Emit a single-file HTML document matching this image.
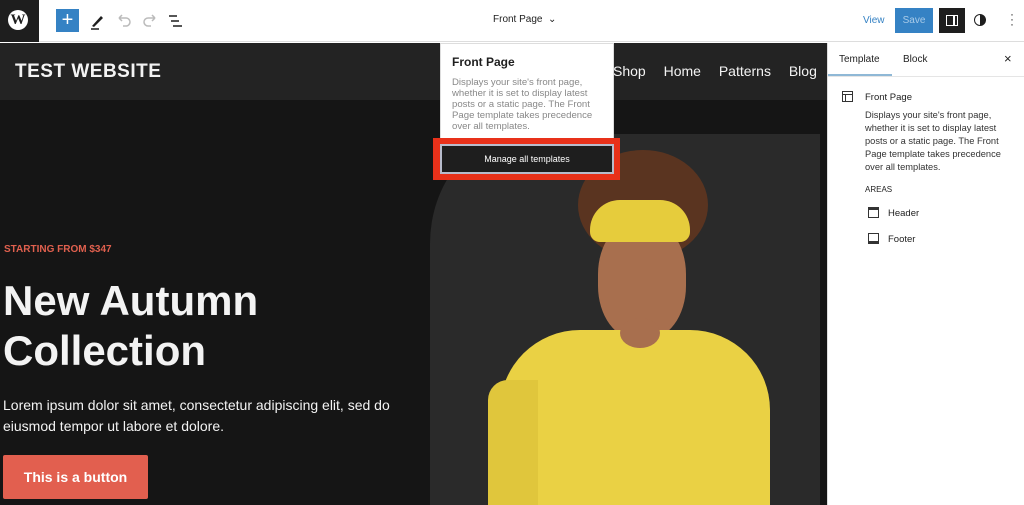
<!DOCTYPE html>
<html><head><meta charset="utf-8"><style>
*{margin:0;padding:0;box-sizing:border-box}
body{width:1024px;height:505px;overflow:hidden;background:#fff;font-family:"Liberation Sans",sans-serif;position:relative}
.a{position:absolute}
</style></head><body>
<div class="a" style="left:0;top:0;width:1024px;height:42px;background:#fff;border-bottom:1px solid #ddd"></div>
<div class="a" style="left:0;top:0;width:39px;height:42px;background:#1e1e1e"></div>
<div class="a" style="left:8px;top:10px;width:20px;height:20px;border-radius:50%;background:#fff;color:#1e1e1e;font:bold 15px 'Liberation Serif',serif;text-align:center;line-height:20px">W</div>
<div class="a" style="left:56px;top:9px;width:23px;height:23px;background:#3582c4;color:#fff;font-size:20px;text-align:center;line-height:22px">+</div>
<svg class="a" style="left:88px;top:11px" width="20" height="20" viewBox="0 0 20 20"><path d="M4 15 L13 5 l2 2 L6 16 Z" fill="#1e1e1e"/><path d="M3 18h8" stroke="#1e1e1e" stroke-width="1.5"/></svg>
<svg class="a" style="left:115px;top:12px" width="18" height="18" viewBox="0 0 18 18"><path d="M4 6h7a4 4 0 010 8H8M4 6l3-3M4 6l3 3" stroke="#bbb" fill="none" stroke-width="1.5"/></svg>
<svg class="a" style="left:141px;top:12px" width="18" height="18" viewBox="0 0 18 18"><path d="M14 6H7a4 4 0 000 8h3M14 6l-3-3M14 6l-3 3" stroke="#bbb" fill="none" stroke-width="1.5"/></svg>
<svg class="a" style="left:167px;top:12px" width="18" height="18" viewBox="0 0 18 18"><path d="M2 4h8M4 9h8M6 14h9" stroke="#1e1e1e" stroke-width="1.6"/></svg>
<div class="a" style="left:493px;top:14px;font-size:10px;color:#1e1e1e">Front Page &nbsp;⌄</div>
<div class="a" style="left:863px;top:15px;font-size:10px;color:#3582c4">View</div>
<div class="a" style="left:895px;top:8px;width:38px;height:25px;background:#3582c4;color:#a9cbe8;font-size:10px;text-align:center;line-height:25px">Save</div>
<div class="a" style="left:939px;top:8px;width:26px;height:25px;background:#1e1e1e"><div class="a" style="left:7px;top:7px;width:12px;height:11px;border:1.5px solid #fff"></div><div class="a" style="left:14px;top:7px;width:1.5px;height:11px;background:#fff"></div></div>
<div class="a" style="left:974px;top:14px;width:12px;height:12px;border-radius:50%;border:1.5px solid #1e1e1e;background:linear-gradient(90deg,#fff 50%,#1e1e1e 50%)"></div>
<div class="a" style="left:1010px;top:12px;font-size:12px;color:#333;line-height:5px">·<br>·<br>·</div>
<div class="a" style="left:0;top:43px;width:827px;height:462px;background:#151515"></div>
<div class="a" style="left:0;top:43px;width:827px;height:57px;background:#232323"></div>
<div class="a" style="left:15px;top:61px;font-size:19px;font-weight:bold;color:#f3f3f3;letter-spacing:.5px">TEST WEBSITE</div>
<div class="a" style="left:613px;top:63px;font-size:14px;color:#f3f3f3;word-spacing:14px">Shop Home Patterns Blog</div>
<div class="a" style="left:430px;top:134px;width:390px;height:371px;background:#2a2a2a;border-top-left-radius:90px 110px"></div>
<div class="a" style="left:578px;top:150px;width:130px;height:110px;border-radius:50%;background:#5a3420"></div>
<div class="a" style="left:598px;top:220px;width:88px;height:120px;border-radius:45%;background:#a86f4e"></div>
<div class="a" style="left:590px;top:200px;width:100px;height:42px;border-radius:30px 30px 10px 10px;background:#e6cc3c"></div>
<div class="a" style="left:500px;top:330px;width:270px;height:175px;border-radius:80px 80px 0 0;background:#ead144"></div>
<div class="a" style="left:488px;top:380px;width:50px;height:125px;background:#e0c63c;border-radius:20px 0 0 0"></div>
<div class="a" style="left:620px;top:318px;width:40px;height:30px;border-radius:50%;background:#a86f4e"></div>
<div class="a" style="left:4px;top:244px;font-size:10px;font-weight:bold;color:#e0604e">STARTING FROM $347</div>
<div class="a" style="left:3px;top:276px;font-size:42px;font-weight:bold;color:#f3f3f3;line-height:50px">New Autumn<br>Collection</div>
<div class="a" style="left:3px;top:395px;font-size:14px;color:#f3f3f3;line-height:21px">Lorem ipsum dolor sit amet, consectetur adipiscing elit, sed do<br>eiusmod tempor ut labore et dolore.</div>
<div class="a" style="left:3px;top:455px;width:145px;height:44px;background:#e25f4f;border-radius:2px;color:#fff;font-size:14px;font-weight:bold;text-align:center;line-height:44px">This is a button</div>
<div class="a" style="left:440px;top:43px;width:174px;height:132px;background:#fff;border:1px solid #ddd"></div>
<div class="a" style="left:452px;top:55px;font-size:12px;font-weight:bold;color:#1e1e1e">Front Page</div>
<div class="a" style="left:452px;top:77px;font-size:9.6px;color:#888;line-height:11px;width:156px">Displays your site's front page, whether it is set to display latest posts or a static page. The Front Page template takes precedence over all templates.</div>
<div class="a" style="left:433px;top:138px;width:187px;height:42px;background:#e8311a"></div>
<div class="a" style="left:440px;top:144px;width:174px;height:30px;background:#1e1e1e;border:2px solid #b8bccc;color:#fff;font-size:9px;text-align:center;line-height:26px">Manage all templates</div>
<div class="a" style="left:827px;top:43px;width:197px;height:462px;background:#fff;border-left:1px solid #ddd"></div>
<div class="a" style="left:828px;top:76px;width:196px;height:1px;background:#e5e5e5"></div>
<div class="a" style="left:828px;top:74px;width:64px;height:2px;background:#8fb8d6"></div>
<div class="a" style="left:839px;top:54px;font-size:10px;color:#1e1e1e">Template</div>
<div class="a" style="left:903px;top:54px;font-size:10px;color:#1e1e1e">Block</div>
<div class="a" style="left:1004px;top:51px;font-size:13px;color:#1e1e1e">×</div>
<div class="a" style="left:842px;top:91px;width:11px;height:11px;border:1.3px solid #333"></div>
<div class="a" style="left:842px;top:94px;width:11px;height:1.3px;background:#333"></div>
<div class="a" style="left:845px;top:94px;width:1.3px;height:8px;background:#333"></div>
<div class="a" style="left:865px;top:92px;font-size:9.5px;color:#1e1e1e">Front Page</div>
<div class="a" style="left:865px;top:109px;font-size:9.3px;color:#333;line-height:13px;width:150px">Displays your site's front page, whether it is set to display latest posts or a static page. The Front Page template takes precedence over all templates.</div>
<div class="a" style="left:865px;top:185px;font-size:8px;color:#1e1e1e">AREAS</div>
<div class="a" style="left:868px;top:207px;width:11px;height:11px;border:1.3px solid #333;border-top-width:3px"></div>
<div class="a" style="left:888px;top:208px;font-size:9.5px;color:#1e1e1e">Header</div>
<div class="a" style="left:868px;top:233px;width:11px;height:11px;border:1.3px solid #333;border-bottom-width:3px"></div>
<div class="a" style="left:888px;top:234px;font-size:9.5px;color:#1e1e1e">Footer</div>
</body></html>
